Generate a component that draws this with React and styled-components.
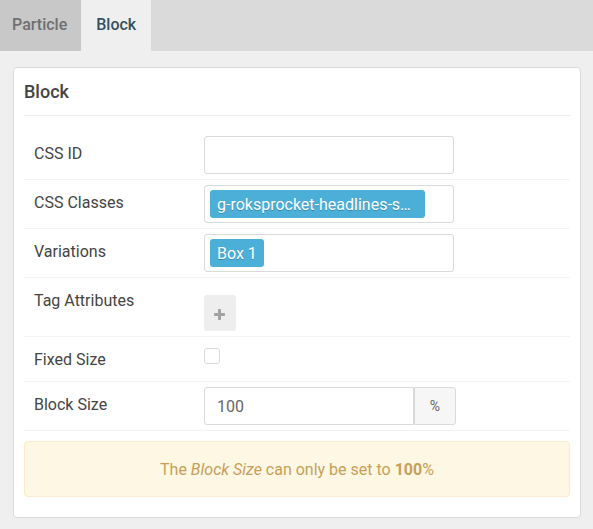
import React, { useState } from 'react';
import styled, { createGlobalStyle } from 'styled-components';

const GlobalStyle = createGlobalStyle`
  *, *::before, *::after { box-sizing: border-box; }
  body {
    margin: 0;
    background: #efefef;
    color: #444;
    font: 400 16px/24px Roboto, sans-serif;
  }
  input, button { font: inherit; color: inherit; }
`;

const TabBar = styled.div`
  display: flex;
  background: #dadada;
`;

const Tab = styled.button`
  height: 51px;
  padding: 0 15px 2px;
  border: 0;
  font-weight: 500;
  line-height: 24px;
  background: ${({ $active }) => ($active ? '#efefef' : '#c8c8c8')};
  color: ${({ $active }) => ($active ? '#35505f' : '#6f6f6f')};
  cursor: pointer;

  &:first-child { padding: 0 14px 2px 12px; }
`;

const Card = styled.form`
  margin: 16px 12px 11px 13px;
  padding: 0 10px 20px;
  background: #fff;
  border: 1px solid #dadada;
  border-radius: 4px;
`;

const CardTitle = styled.h4`
  margin: 0 0 15px;
  padding: 12px 0 11px;
  border-bottom: 1px solid #ececec;
  font-size: 18px;
  font-weight: 500;
  line-height: 24px;
`;

const Row = styled.div`
  display: flex;
  align-items: flex-start;
  padding: 5px 10px;
  border-bottom: 1px solid #f3f3f3;
`;

const Label = styled.label`
  flex: 0 0 170px;
  padding: 6px 0 4px;
  line-height: 24px;
`;

const TextInput = styled.input`
  width: 250px;
  height: 38px;
  padding: 0 12px;
  border: 1px solid #dadada;
  border-radius: 3px;
  background: #fff;
  outline: 0;
`;

const TagBox = styled.div`
  display: flex;
  width: 250px;
  height: 38px;
  padding: 4px 5px;
  border: 1px solid #dadada;
  border-radius: 3px;
`;

const Tag = styled.span`
  padding: 1px 7px 0;
  min-width: ${({ $wide }) => ($wide ? '215px' : '54px')};
  border-radius: 3px;
  background: #4bafd7;
  color: #fff;
  line-height: 28px;
  white-space: nowrap;
  text-shadow: 0 1px 0 rgba(0, 51, 83, 0.3);
`;

const TagInput = styled.input`
  flex: 1;
  min-width: 0;
  border: 0;
  padding: 0 4px;
  outline: 0;
  background: transparent;
`;

const AddButton = styled.button`
  display: flex;
  align-items: center;
  justify-content: center;
  width: 32px;
  height: 36px;
  margin: 12px 0 0;
  padding: 2px 1px 0 0;
  border: 0;
  border-radius: 3px;
  background: #eee;
  color: #a2a2a2;
  cursor: pointer;
`;

const Checkbox = styled.input`
  appearance: none;
  width: 16px;
  height: 16px;
  margin: 6px 0 12px;
  border: 1px solid #dadada;
  border-radius: 3px;
  background: #fff;

  &:checked { background: #4bafd7; }
`;

const InputGroup = styled.div`
  display: flex;
  width: 252px;
`;

const SizeInput = styled(TextInput)`
  flex: 1;
  min-width: 0;
  border-radius: 3px 0 0 3px;
  color: #666;
`;

const Unit = styled.span`
  width: 42px;
  border: 1px solid #dadada;
  border-radius: 0 3px 3px 0;
  background: #f6f6f6;
  color: #666;
  font-size: 14px;
  line-height: 36px;
  text-align: center;
`;

const Notice = styled.p`
  margin: 10px 0 0;
  padding: 16px 15px 14px;
  border: 1px solid #faebcc;
  border-radius: 4px;
  background: #fdf7e3;
  color: #c79f5a;
  text-align: center;
`;

const Emphasis = styled.em`
  font-style: italic;
`;

const Strong = styled.strong`
  font-weight: 700;
`;

export default function App() {
  const [active, setActive] = useState('Block');
  return (
    <>
      <GlobalStyle />
      <TabBar role="tablist">
        {['Particle', 'Block'].map((name) => (
          <Tab
            key={name}
            type="button"
            role="tab"
            aria-selected={active === name}
            $active={active === name}
            onClick={() => setActive(name)}
          >
            {name}
          </Tab>
        ))}
      </TabBar>
      <Card>
        <CardTitle>Block</CardTitle>
        <Row>
          <Label htmlFor="css-id">CSS ID</Label>
          <TextInput id="css-id" type="text" />
        </Row>
        <Row>
          <Label htmlFor="css-classes">CSS Classes</Label>
          <TagBox>
            <Tag $wide>g-roksprocket-headlines-s…</Tag>
            <TagInput id="css-classes" type="text" />
          </TagBox>
        </Row>
        <Row>
          <Label htmlFor="variations">Variations</Label>
          <TagBox>
            <Tag>Box 1</Tag>
            <TagInput id="variations" type="text" />
          </TagBox>
        </Row>
        <Row>
          <Label htmlFor="add-attribute">Tag Attributes</Label>
          <AddButton id="add-attribute" type="button">
            <svg width="11" height="11" viewBox="0 0 11 11" fill="currentColor" aria-hidden="true">
              <path d="M4.8 0h1.4q.8 0 .8.8V4h3.2q.8 0 .8.8v1.4q0 .8-.8.8H7v3.2q0 .8-.8.8H4.8q-.8 0-.8-.8V7H.8Q0 7 0 6.2V4.8Q0 4 .8 4H4V.8Q4 0 4.8 0Z" />
            </svg>
          </AddButton>
        </Row>
        <Row>
          <Label htmlFor="fixed-size">Fixed Size</Label>
          <Checkbox id="fixed-size" type="checkbox" />
        </Row>
        <Row>
          <Label htmlFor="block-size">Block Size</Label>
          <InputGroup>
            <SizeInput id="block-size" type="text" defaultValue="100" />
            <Unit>%</Unit>
          </InputGroup>
        </Row>
        <Notice>
          The <Emphasis>Block Size</Emphasis> can only be set to <Strong>100</Strong>%
        </Notice>
      </Card>
    </>
  );
}
